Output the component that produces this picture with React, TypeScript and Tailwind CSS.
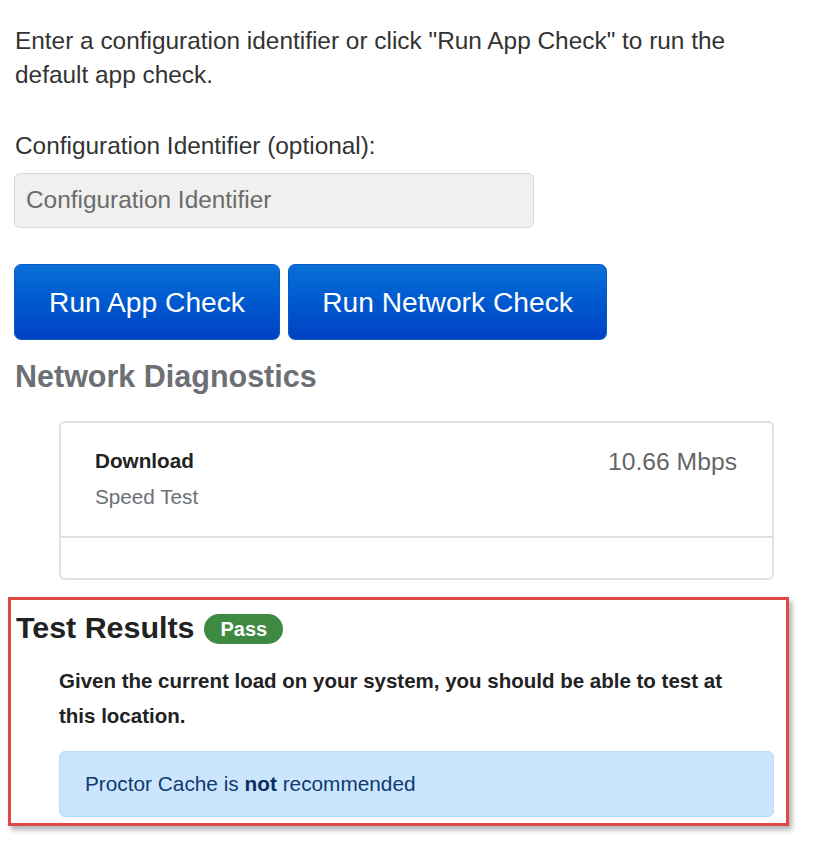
import React from "react";

export default function App() {
  return (
    <div className="w-[824px] h-[841px] bg-white overflow-hidden text-[#333]" style={{ fontFamily: '"Liberation Sans", Arial, sans-serif' }}>
      <div className="pl-[15px] pt-[24px]">
        <p className="text-[24.4px] leading-[34px] w-[740px] text-[#333]">
          Enter a configuration identifier or click "Run App Check" to run the default app check.
        </p>
        <label className="block mt-[37px] text-[24.4px] leading-[34px] text-[#333]">Configuration Identifier (optional):</label>
        <div className="mt-[10px] ml-[-1px] w-[520px] h-[55px] rounded-[6px] border border-[#d9d9d9] bg-[#f0f0f0] flex items-center pl-[11px] text-[24.4px] text-[#6b6b6b]">
          Configuration Identifier
        </div>
        <div className="mt-[36px] ml-[-1px] flex gap-[8px]">
          <button className="w-[266px] h-[76px] rounded-[7px] text-white text-[28.2px] bg-gradient-to-b from-[#0a6fd8] to-[#0041c4] border border-[#0b5ac0]">
            Run App Check
          </button>
          <button className="w-[319px] h-[76px] rounded-[7px] text-white text-[28.2px] bg-gradient-to-b from-[#0a6fd8] to-[#0041c4] border border-[#0b5ac0]">
            Run Network Check
          </button>
        </div>
        <h2 className="mt-[17px] text-[30.5px] leading-[38px] font-bold text-[#6c7075]">Network Diagnostics</h2>
        <div className="mt-[26px] ml-[44px] w-[715px] h-[159px] rounded-[6px] border-2 border-[#e0e0e0] flex flex-col">
          <div className="h-[115px] border-b-2 border-[#e0e0e0] flex justify-between pl-[34px] pr-[35px] pt-[26px]">
            <div>
              <div className="text-[20.7px] leading-[24px] font-bold text-[#222]">Download</div>
              <div className="mt-[12px] text-[20.7px] leading-[24px] text-[#6c7075]">Speed Test</div>
            </div>
            <div className="text-[24.7px] leading-[26px] text-[#666]">10.66 Mbps</div>
          </div>
        </div>
      </div>
      <div className="mt-[17px] ml-[8px] w-[781px] h-[229px] border-[3px] border-[#e04747] shadow-[3px_4px_5px_rgba(0,0,0,0.3)] pl-[5px] pt-[9px]">
        <div className="flex items-center gap-[10px]">
          <h2 className="text-[30.4px] leading-[36px] font-bold text-[#222]">Test Results</h2>
          <span className="mt-[4px] h-[30px] px-[16px] rounded-full bg-[#3f8a43] text-white font-bold text-[20px] flex items-center">Pass</span>
        </div>
        <p className="mt-[18px] ml-[43px] w-[690px] text-[20.5px] leading-[35px] font-bold text-[#222]">
          Given the current load on your system, you should be able to test at this location.
        </p>
        <div className="mt-[18px] ml-[43px] w-[715px] h-[66px] rounded-[6px] border border-[#b8daff] bg-[#cce5ff] flex items-center pl-[25px] text-[20.8px] text-[#0f3a6e]">
          <span>Proctor Cache is <b className="text-[#0b2f5c]">not</b> recommended</span>
        </div>
      </div>
    </div>
  );
}
